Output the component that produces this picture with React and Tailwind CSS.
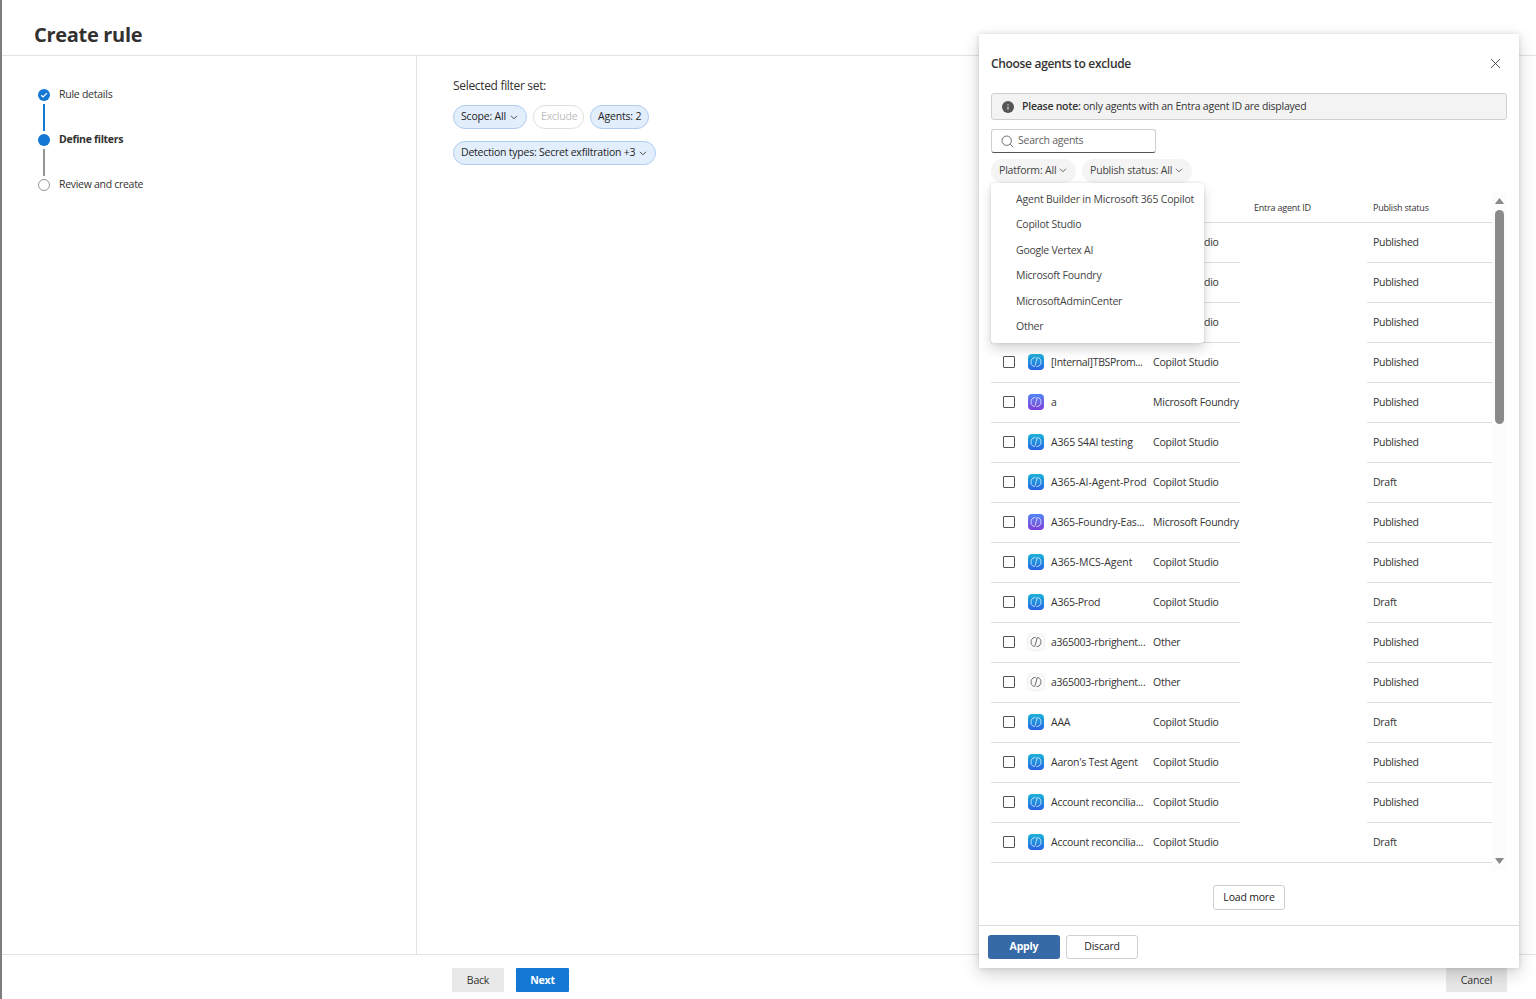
const agents = [
  { name: "", platform: "Copilot Studio", status: "Published" },
  { name: "", platform: "Copilot Studio", status: "Published" },
  { name: "", platform: "Copilot Studio", status: "Published" },
  { name: "[Internal]TBSProm...", platform: "Copilot Studio", status: "Published", tracking: "tracking-[-0.34px]" },
  { name: "a", platform: "Microsoft Foundry", status: "Published" },
  { name: "A365 S4AI testing", platform: "Copilot Studio", status: "Published", tracking: "tracking-[-0.17px]" },
  { name: "A365-AI-Agent-Prod", platform: "Copilot Studio", status: "Draft", tracking: "tracking-[-0.03px]" },
  { name: "A365-Foundry-Eas...", platform: "Microsoft Foundry", status: "Published", tracking: "tracking-[-0.19px]" },
  { name: "A365-MCS-Agent", platform: "Copilot Studio", status: "Published", tracking: "tracking-[-0.01px]" },
  { name: "A365-Prod", platform: "Copilot Studio", status: "Draft" },
  { name: "a365003-rbrighent...", platform: "Other", status: "Published" },
  { name: "a365003-rbrighent...", platform: "Other", status: "Published" },
  { name: "AAA", platform: "Copilot Studio", status: "Draft" },
  { name: "Aaron's Test Agent", platform: "Copilot Studio", status: "Published" },
  { name: "Account reconcilia...", platform: "Copilot Studio", status: "Published" },
  { name: "Account reconcilia...", platform: "Copilot Studio", status: "Draft" },
];

const platforms = [
  "Agent Builder in Microsoft 365 Copilot",
  "Copilot Studio",
  "Google Vertex AI",
  "Microsoft Foundry",
  "MicrosoftAdminCenter",
  "Other",
];

const iconStyles = {
  "Copilot Studio": "bg-linear-to-b from-[#23b2d8] to-[#2b62e4] text-white/80",
  "Microsoft Foundry": "bg-linear-to-b from-[#4a86f7] to-[#7b3fd8] text-white/80",
  Other: "bg-[#fafafa] text-[#555] ring-1 ring-[#f0f0f0]",
};

function Chevron() {
  return (
    <svg viewBox="0 0 8 5" className="mt-0.5 w-2 h-[5px] shrink-0" fill="none" stroke="currentColor" strokeWidth="0.8">
      <path d="M1 0.8 4 3.8 7 0.8" />
    </svg>
  );
}

function AgentIcon({ platform }) {
  return (
    <span className={`size-4 rounded-[4px] flex items-center justify-center shrink-0 ${iconStyles[platform]}`}>
      <svg viewBox="0 0 12 12" className="size-3" fill="none" stroke="currentColor" strokeWidth="0.85" strokeLinecap="round" strokeLinejoin="round">
        <path d="M5.200 1.500H4.300C2.400 2 1 3.700 1 6s1.300 3.800 2.700 4.400c.7.200 1.200-.1 1.400-.9L7 2.500" />
        <path d="M6.800 10.500h.9C9.600 10 11 8.300 11 6S9.700 2.200 8.300 1.600C7.600 1.400 7.100 1.700 6.900 2.500" />
      </svg>
    </span>
  );
}

function Step({ label, state, tracking }) {
  return (
    <div className="flex h-[12px] items-center gap-[9px]">
      {state === "done" && (
        <svg viewBox="0 0 12 12" className="size-3">
          <circle cx="6" cy="6" r="6" fill="#1477d4" />
          <path d="M3.200 6.200 5.100 8 8.900 4.200" fill="none" stroke="#fff" strokeWidth="1.200" />
        </svg>
      )}
      {state === "current" && <span className="size-3 rounded-full bg-[#1477d4]" />}
      {state === "next" && <span className="size-3 rounded-full border-[1.5px] border-[#979593]" />}
      <span className={`pb-0.5 ${state === "current" ? "font-bold" : ""} ${tracking}`}>{label}</span>
    </div>
  );
}

function FilterChip({ children, className, arrow }) {
  return (
    <button className={`h-6 rounded-full border flex items-center justify-between whitespace-nowrap pl-[7px] pr-2 ${className}`}>
      <span>{children}</span>
      {arrow && <Chevron />}
    </button>
  );
}

function AgentRow({ agent }) {
  return (
    <div className="group flex h-10">
      <div className="flex w-[249px] items-center border-b border-[#dcdcdc] pb-px pl-3">
        <span className="size-3 shrink-0 rounded-[1px] border border-[#555]" />
        <div className="ml-[13px] flex w-[125px] shrink-0 items-center gap-[7px]">
          <AgentIcon platform={agent.platform} />
          <span className={`whitespace-nowrap ${agent.tracking || "tracking-[-0.25px]"}`}>{agent.name}</span>
        </div>
        <span className="w-[87px] whitespace-nowrap tracking-[-0.22px]">{agent.platform}</span>
      </div>
      <div className="w-[127px] border-[#dcdcdc] group-last:border-b" />
      <div className="flex flex-1 items-center border-b border-[#dcdcdc] pb-0.5 pl-1.5 tracking-[-0.28px]">{agent.status}</div>
    </div>
  );
}

function AgentPanel() {
  return (
    <div className="absolute left-[977px] top-[34px] flex h-[934px] w-[540px] flex-col bg-white text-[#333] shadow-[0_6px_16px_rgba(0,0,0,0.18),0_0_5px_rgba(0,0,0,0.12)]">
      <div className="flex h-[59px] items-center justify-between pl-3 pr-[18px]">
        <h2 className="text-[12px] font-semibold tracking-[-0.32px]">Choose agents to exclude</h2>
        <svg viewBox="0 0 11 11" className="size-[11px]" stroke="#444" strokeWidth="0.9">
          <path d="M1 1 10 10M10 1 1 10" />
        </svg>
      </div>

      <div className="mx-3 flex h-[27px] items-center rounded-[3px] border border-[#cfcfcf] bg-[#f3f3f3] pl-[10px]">
        <svg viewBox="0 0 12 12" className="mr-2 size-3">
          <circle cx="6" cy="6" r="6" fill="#555" />
          <path d="M6 5.200v3.600M6 3v1.100" stroke="#f3f3f3" strokeWidth="0.9" />
        </svg>
        <p className="pb-px tracking-[-0.25px]">
          <span className="font-semibold">Please note:</span> only agents with an Entra agent ID are displayed
        </p>
      </div>

      <div className="mx-3 mt-[9px] flex h-6 w-[165px] items-center gap-1 rounded-[3px] border border-[#cfcfcf] border-b-[#555] pl-[9px] text-[#616161]">
        <svg viewBox="0 0 13 13" className="size-[13px]" fill="none" stroke="currentColor" strokeWidth="0.9">
          <circle cx="5.700" cy="5.700" r="4.700" />
          <path d="M9.200 9.200 12.300 12.300" />
        </svg>
        <span className="pb-0.5 tracking-[-0.25px]">Search agents</span>
      </div>

      <div className="relative mx-3 mt-1.5 flex gap-1.5">
        <FilterChip arrow className="w-[85px] border-transparent bg-[#f4f4f4] pb-[3px] text-[#444]">Platform: All</FilterChip>
        <FilterChip arrow className="w-[110px] border-transparent bg-[#f4f4f4] pb-[3px] text-[#444]">Publish status: All</FilterChip>
        <ul className="absolute left-0 top-6 z-10 h-[160px] w-[213px] rounded-[3px] bg-white pl-[25px] pt-[3px] text-[#444] shadow-[0_6px_12px_rgba(0,0,0,0.16),0_0_3px_rgba(0,0,0,0.14)]">
          {platforms.map((p) => (
            <li key={p} className="flex h-[25.5px] items-center whitespace-nowrap last:pb-px first:tracking-[-0.19px] tracking-[-0.25px]">{p}</li>
          ))}
        </ul>
      </div>

      <div className="mx-3 mt-[9px] flex h-[678px]">
        <div className="w-[501px]">
          <div className="flex h-[31px] items-center border-b border-[#dcdcdc] pl-[263px] pt-px text-[9px] tracking-[-0.21px]">
            <span className="w-[119px]">Entra agent ID</span>
            <span>Publish status</span>
          </div>
          <div>
            {agents.map((agent, i) => (
              <AgentRow key={i} agent={agent} />
            ))}
          </div>
        </div>
        <div className="flex w-[15px] flex-col items-center bg-[#fcfcfc] py-1.5">
          <svg viewBox="0 0 9 6" className="h-1.5 w-[9px]" fill="#8a8a8a">
            <path d="M4.500 0 8.800 5.400Q8.900 6 8.300 6H.7Q.1 6 .2 5.400Z" />
          </svg>
          <div className="mt-1.5 h-[214px] w-[9px] rounded-full bg-[#8a8a8a]" />
          <svg viewBox="0 0 9 6" className="mt-auto h-1.5 w-[9px]" fill="#8a8a8a">
            <path d="M4.500 6 8.800.6Q8.900 0 8.300 0H.7Q.1 0 .2.600Z" />
          </svg>
        </div>
      </div>

      <button className="mx-auto mt-[15px] h-[25px] w-[72px] rounded-[3px] border border-[#cfcfcf] pb-0.5 font-medium text-[#242424]">
        Load more
      </button>

      <div className="mt-[15px] flex gap-1.5 border-t border-[#dcdcdc] pl-[9px] pt-[9px]">
        <button className="h-6 w-[72px] rounded-[3px] bg-[#366aa6] pb-0.5 font-bold text-white">Apply</button>
        <button className="h-6 w-[72px] rounded-[3px] border border-[#cfcfcf] pb-0.5 font-medium text-[#242424]">Discard</button>
      </div>
    </div>
  );
}

function App() {
  return (
    <div className="relative flex h-[999px] w-[1536px] flex-col overflow-hidden border-l-2 border-[#7d7d7d] bg-white font-['Open_Sans','Noto_Sans',sans-serif] text-[10.5px] leading-[14px] tracking-[-0.19px] text-[#323130]">
      <header className="flex h-14 items-center border-b border-[#e3e3e3] pl-8 pt-3.5">
        <h1 className="text-[20px] font-bold tracking-[-0.3px]">Create rule</h1>
      </header>

      <div className="flex flex-1">
        <nav className="w-[415px] border-r border-[#e3e3e3] pl-9 pt-[33px]">
          <Step label="Rule details" state="done" tracking="tracking-[-0.25px]" />
          <div className="my-[3px] ml-[5px] h-[27px] w-0.5 bg-[#1477d4]" />
          <Step label="Define filters" state="current" tracking="tracking-[-0.3px]" />
          <div className="my-[3px] ml-[5px] h-[27px] w-0.5 bg-[#979593]" />
          <Step label="Review and create" state="next" tracking="tracking-[-0.29px]" />
        </nav>

        <main className="pl-9 pt-[22px]">
          <p className="h-4 text-[12px] leading-4 tracking-[-0.32px]">Selected filter set:</p>
          <div className="mt-[11px] flex gap-1.5 text-[#242424]">
            <FilterChip arrow className="w-[74px] border-[#b0cdf0] bg-[#e2eefb] pb-0.5">Scope: All</FilterChip>
            <FilterChip className="w-[51px] border-[#e0e0e0] pb-0.5 text-[#bdbdbd]">Exclude</FilterChip>
            <FilterChip className="w-[59px] border-[#b0cdf0] bg-[#e2eefb] pb-0.5">Agents: 2</FilterChip>
          </div>
          <div className="mt-3 text-[#242424]">
            <FilterChip arrow className="w-[203px] border-[#b0cdf0] bg-[#e2eefb] pb-0.5 tracking-[-0.23px]">Detection types: Secret exfiltration +3</FilterChip>
          </div>
        </main>
      </div>

      <footer className="flex h-[45px] items-start border-t border-[#e3e3e3] pl-[450px] pt-[13px]">
        <button className="h-6 w-[52px] rounded-[1px] bg-[#e8e8e8] font-medium">Back</button>
        <button className="ml-3 h-6 w-[53px] rounded-[1px] bg-[#1477d4] font-bold text-white">Next</button>
        <button className="ml-auto mr-[29px] h-6 w-[61px] rounded-[1px] bg-[#e8e8e8] font-medium">Cancel</button>
      </footer>

      <AgentPanel />
    </div>
  );
}

export default App;
